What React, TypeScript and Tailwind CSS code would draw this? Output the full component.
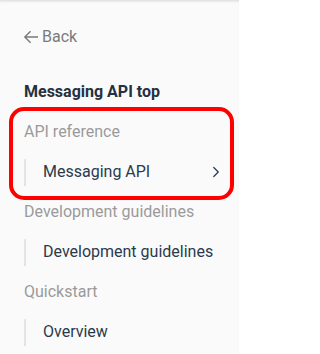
import { ChevronRight } from 'lucide-react';

const FONT = { fontFamily: 'Roboto, "Liberation Sans", sans-serif' };

type Section = { title: string; items: { label: string; chevron?: boolean }[] };

const SECTIONS: Section[] = [
  { title: 'API reference', items: [{ label: 'Messaging API', chevron: true }] },
  { title: 'Development guidelines', items: [{ label: 'Development guidelines' }] },
  { title: 'Quickstart', items: [{ label: 'Overview' }] },
];

function BackArrow() {
  return (
    <svg width="16" height="14" viewBox="0 0 16 14" fill="none" className="shrink-0">
      <path d="M15 7H1.8M7.6 1.2L1.8 7l5.8 5.8" stroke="#7a7a7a" strokeWidth="1.4" />
    </svg>
  );
}

export default function App() {
  return (
    <div
      className="relative h-[354px] w-[239px] overflow-hidden bg-[#fafafa] shadow-[inset_0_3px_3px_-2px_rgba(0,0,0,0.14)]"
      style={FONT}
    >
      <div className="pt-[17px]">
        {/* Back link */}
        <div className="flex h-10 items-center gap-[3px] pl-[23px] text-base text-[#7a7a7a]">
          <BackArrow />
          <span className="leading-10">Back</span>
        </div>

        <div className="mt-[15px]">
          <div className="h-10 pl-6 text-base font-bold leading-10 text-[#233142]">Messaging API top</div>

          {SECTIONS.map(s => (
            <div key={s.title}>
              <div className="h-10 pl-6 text-base leading-10 text-[#9a9a9a]">{s.title}</div>
              {s.items.map(it => (
                <div key={it.label} className="flex h-10 items-center pl-6 pr-[14px]">
                  <div className="flex h-[27px] w-full items-center justify-between border-l-2 border-[#e4e4e4] pl-[17px] text-base text-[#2a3a4c]">
                    <span className="whitespace-nowrap">{it.label}</span>
                    {it.chevron && <ChevronRight size={18} strokeWidth={1.6} className="shrink-0 text-[#2a3a4c]" />}
                  </div>
                </div>
              ))}
            </div>
          ))}
        </div>
      </div>

      {/* highlight annotation */}
      <div className="absolute left-[9px] top-[107px] h-[93px] w-[225px] rounded-[15px] border-4 border-[#ff0000]" />
    </div>
  );
}
